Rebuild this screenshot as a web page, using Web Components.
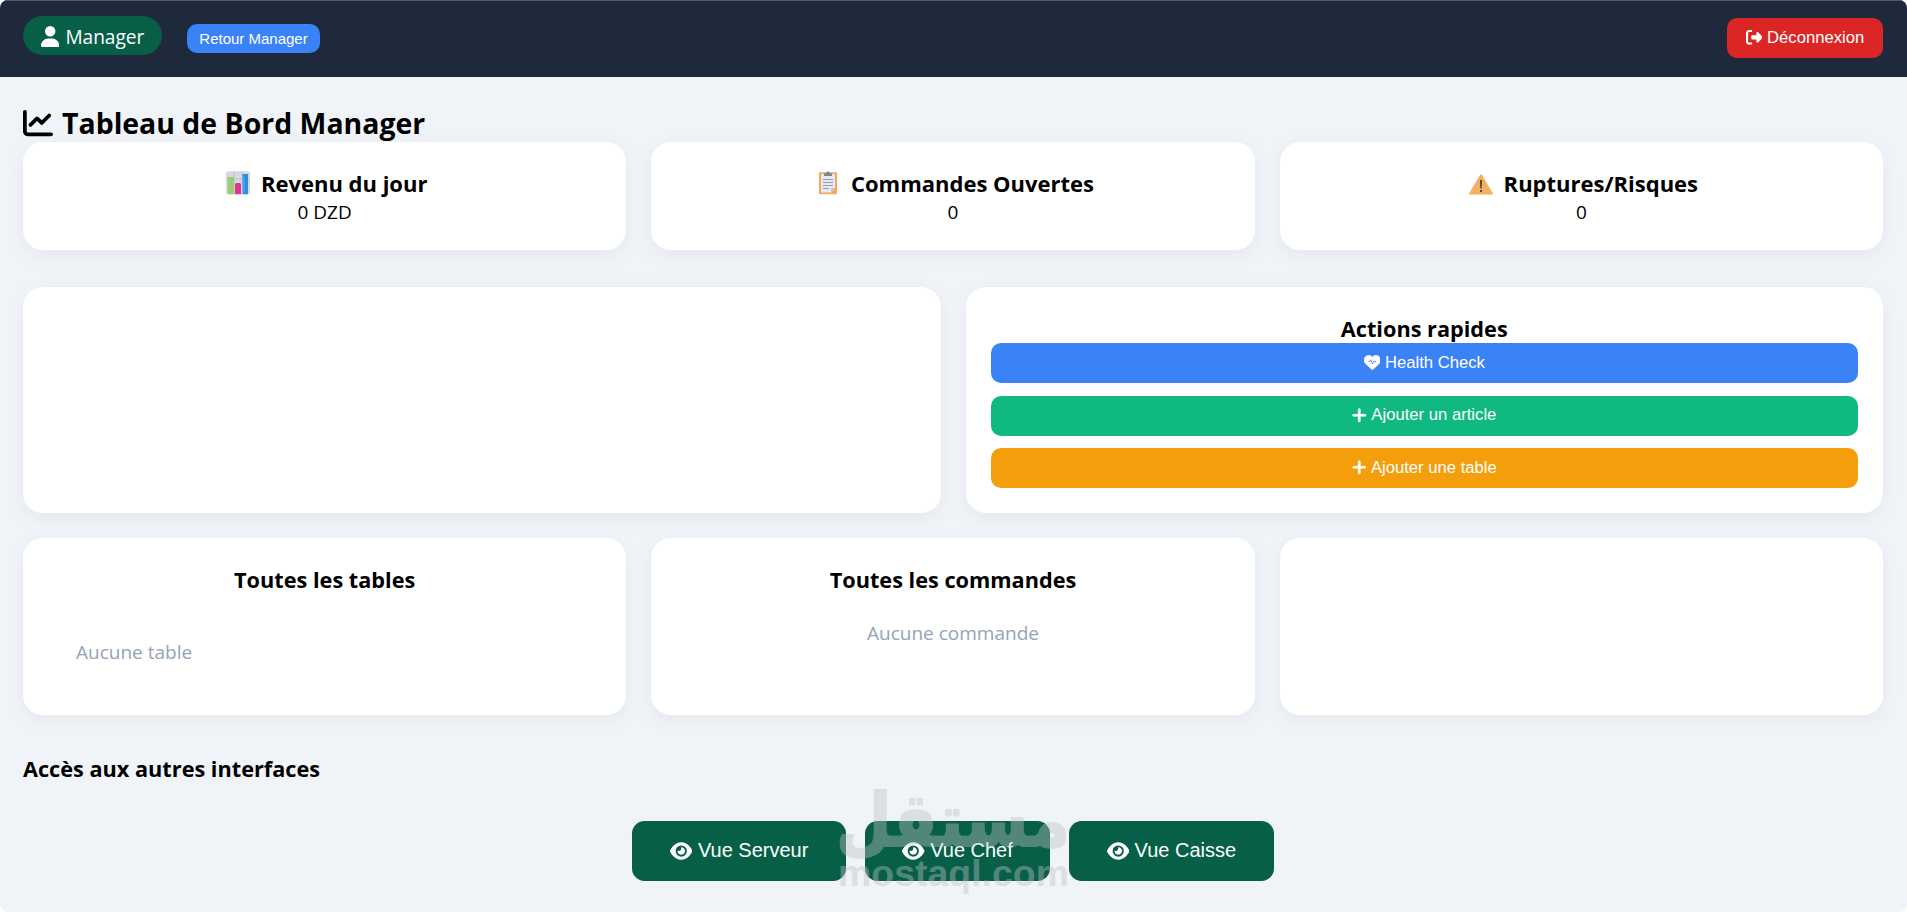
<!DOCTYPE html>
<html lang="fr">
<head>
<meta charset="utf-8">
<title>Tableau de Bord Manager</title>
<style>
  body {
    margin: 0;
    background: #fff;
    font-family: "Open Sans", "Noto Sans", sans-serif;
    color: #000;
  }
</style>
</head>
<body>
<manager-dashboard></manager-dashboard>

<script>
const ICONS = {
  user: { box: '0 0 448 512', body: '<path d="M224 256A128 128 0 1 0 224 0a128 128 0 1 0 0 256zm-45.7 48C79.8 304 0 383.8 0 482.3C0 498.7 13.3 512 29.7 512H418.3c16.4 0 29.7-13.3 29.7-29.7C448 383.8 368.2 304 269.7 304H178.3z"/>' },
  chart: { box: '0 0 512 512', body: '<path d="M64 64c0-17.7-14.3-32-32-32S0 46.3 0 64V400c0 44.2 35.8 80 80 80H480c17.7 0 32-14.3 32-32s-14.3-32-32-32H80c-8.8 0-16-7.2-16-16V64zm406.6 86.6c12.5-12.5 12.5-32.8 0-45.3s-32.8-12.5-45.3 0L320 210.7l-57.4-57.4c-12.5-12.5-32.8-12.5-45.3 0l-112 112c-12.5 12.5-12.5 32.8 0 45.3s32.8 12.5 45.3 0L240 221.3l57.4 57.4c12.5 12.5 32.8 12.5 45.3 0l128-128z"/>' },
  logout: { box: '0 0 512 512', body: '<path d="M377.9 105.9L500.7 228.7c7.2 7.2 11.3 17.1 11.3 27.3s-4.1 20.1-11.3 27.3L377.9 406.1c-6.4 6.4-15 9.9-24 9.9c-18.7 0-33.9-15.2-33.9-33.9l0-62.1-128 0c-17.7 0-32-14.3-32-32l0-64c0-17.7 14.3-32 32-32l128 0 0-62.1c0-18.7 15.2-33.9 33.9-33.9c9 0 17.6 3.6 24 9.9zM160 96L96 96c-17.7 0-32 14.3-32 32l0 256c0 17.7 14.3 32 32 32l64 0c17.7 0 32 14.3 32 32s-14.3 32-32 32l-64 0c-53 0-96-43-96-96L0 128C0 75 43 32 96 32l64 0c17.7 0 32 14.3 32 32s-14.3 32-32 32z"/>' },
  heart: { box: '0 0 512 512', body: '<path d="M47.6 300.4L228.3 469.1c7.5 7 17.4 10.9 27.7 10.9s20.2-3.9 27.7-10.9L464.4 300.4c30.4-28.3 47.6-68 47.6-109.5v-5.8c0-69.9-50.5-129.5-119.4-141C347 36.5 300.6 51.4 268 84L256 96 244 84c-32.6-32.6-79-47.5-124.6-39.9C50.5 55.6 0 115.2 0 185.1v5.8c0 41.5 17.2 81.2 47.6 109.5z" stroke="currentColor" stroke-width="14"/><path d="M140 232h34l34-52 50 124 48-92 22 22h44" fill="none" stroke="#3b82f6" stroke-width="26"/>' },
  plus: { box: '0 0 448 512', body: '<path d="M256 80c0-17.7-14.3-32-32-32s-32 14.3-32 32V224H48c-17.7 0-32 14.3-32 32s14.3 32 32 32H192V432c0 17.7 14.3 32 32 32s32-14.3 32-32V288H400c17.7 0 32-14.3 32-32s-14.3-32-32-32H256V80z" stroke="currentColor" stroke-width="16"/>' },
  eye: { box: '0 0 576 512', body: '<path d="M288 32c-80.8 0-145.5 36.8-192.6 80.6C48.6 156 17.3 208 2.5 243.7c-3.3 7.9-3.3 16.7 0 24.6C17.3 304 48.6 356 95.4 399.4C142.5 443.2 207.2 480 288 480s145.5-36.8 192.6-80.6c46.8-43.5 78.1-95.4 93-131.1c3.3-7.9 3.3-16.7 0-24.6c-14.9-35.7-46.2-87.7-93-131.1C433.5 68.8 368.8 32 288 32zM144 256a144 144 0 1 1 288 0 144 144 0 1 1 -288 0zm144-64c0 35.3-28.7 64-64 64c-7.1 0-13.9-1.2-20.3-3.3c-5.5-1.8-11.9 1.6-11.7 7.4c.3 6.9 1.3 13.8 3.2 20.7c13.7 51.2 66.4 81.6 117.6 67.9s81.6-66.4 67.9-117.6c-11.1-41.5-47.8-69.4-88.6-71.1c-5.8-.2-9.2 6.1-7.4 11.7c2.1 6.4 3.3 13.2 3.3 20.3z"/>' },
  bars: { box: '0 0 24 24', body: '<rect y=".3" width="24" height="23" rx="2.5" fill="#d6d9e2"/><path d="M8 .3v23M16 .3v23M0 8h24" stroke="#bcbfca" stroke-width=".9"/><path d="M2 6h6v17.3H2.500q-1 0-1-1V6z" fill="#9dcc78"/><path d="M9 13.500q0-1.500 1.500-1.500h3q1.500 0 1.500 1.500v9.800H9z" fill="#e0368c"/><path d="M16.500 3h5.500v20.300h-5.500z" fill="#2b8fe0"/><path d="M18 5v17" stroke="#55b5f3" stroke-width="1"/>' },
  clipboard: { box: '-3 0 24 24', body: '<rect y="1.300" width="18" height="22" rx="1" fill="#f0a956"/><path d="M2 3h14v14l-4 4.500H2z" fill="#e9e9f3"/><path d="M12 21.500V17h4z" fill="#c3c3d6"/><path d="M5 5V2.500h2a2 2 0 0 1 4 0h2V5z" fill="#7c8793"/><path d="M4 8.500h10M4 11.500h10M4 14.500h10M4 17.500h6" stroke="#8e9eb4" stroke-width="1"/>' },
  warning: { box: '0 0 24 24', body: '<path d="M11 4q1-1.500 2 0l10.700 18q.6 1.400-.9 1.400H1.200Q-.3 23.400.3 22z" fill="#f5b05b"/><path d="M10.900 9h2.200l-.4 8.500h-1.400zM11 19h2v2h-2z" fill="#4a4857"/>' }
}

class DashIcon extends HTMLElement {
  constructor() {
    super()
    this.attachShadow({ mode: 'open' })
  }

  connectedCallback() {
    const icon = ICONS[this.getAttribute('name')]
    this.shadowRoot.innerHTML = `
      <style>
        :host { display: inline-block; flex: none; height: 1em; }
        svg { display: block; height: 1em; fill: currentColor; }
      </style>
      <svg viewBox="${icon.box}" aria-hidden="true">${icon.body}</svg>
    `
  }
}

const buttonTemplate = document.createElement('template')
buttonTemplate.innerHTML = `
  <style>
    :host { display: block; }
    button {
      display: flex;
      align-items: center;
      justify-content: center;
      gap: .28em;
      box-sizing: border-box;
      width: 100%;
      height: var(--h, 40px);
      padding: 0 var(--pad, 18px) 1px;
      border: 0;
      border-radius: var(--r, 10px);
      background: var(--bg, #3b82f6);
      color: #fff;
      font: var(--size, 16.67px) "Liberation Sans", Arial, sans-serif;
      white-space: nowrap;
      cursor: pointer;
    }
  </style>
  <button><slot name="icon"></slot><span><slot></slot></span></button>
`

class DashButton extends HTMLElement {
  constructor() {
    super()
    this.attachShadow({ mode: 'open' })
    this.shadowRoot.appendChild(buttonTemplate.content.cloneNode(true))
  }
}

const cardTemplate = document.createElement('template')
cardTemplate.innerHTML = `
  <style>
    :host {
      display: block;
      box-sizing: border-box;
      padding: 25px;
      border-radius: 20px;
      background: #fff;
      box-shadow: 0 5px 19px rgba(0, 0, 0, .05);
      text-align: center;
      font-size: 19px;
      line-height: 29px;
    }
  </style>
  <slot name="title"></slot>
  <slot></slot>
`

class DashCard extends HTMLElement {
  constructor() {
    super()
    this.attachShadow({ mode: 'open' })
    this.shadowRoot.appendChild(cardTemplate.content.cloneNode(true))
  }
}

class DashHeading extends HTMLElement {
  constructor() {
    super()
    this.attachShadow({ mode: 'open' })
    this.shadowRoot.innerHTML = `
      <style>
        :host { display: block; }
        h3 {
          display: flex;
          justify-content: var(--justify, center);
          gap: 11px;
          margin: 0;
          font-size: var(--title-size, 21.700px);
          line-height: var(--title-line, 33px);
          height: 31px;
          font-weight: 700;
          white-space: nowrap;
        }
        ::slotted(dash-icon) { font-size: 24px; margin: 4px 0 0 4px; }
      </style>
      <h3><slot name="icon"></slot><span><slot></slot></span></h3>
    `
  }
}

class DashHeader extends HTMLElement {
  constructor() {
    super()
    this.attachShadow({ mode: 'open' })
    this.shadowRoot.innerHTML = `
      <style>
        :host {
          display: flex;
          align-items: flex-start;
          box-sizing: border-box;
          height: 77px;
          padding: 15px 24px 0 23px;
          border-top: 1px solid #4f5a68;
          background: #1e293b;
          color: #fff;
        }
        .role {
          display: flex;
          align-items: center;
          gap: 6px;
          box-sizing: border-box;
          width: 139px;
          height: 39px;
          padding: 2px 0 0 18px;
          border-radius: 20px;
          background: #065f46;
          font-size: 19.100px;
          white-space: nowrap;
        }
        .role dash-icon { font-size: 21px; margin-top: -1px; }
        .back { width: 133px; margin: 8px 0 0 25px; --h: 29px; --size: 15px; --pad: 0; }
        .logout { width: 156px; margin: 2px 0 0 auto; --bg: #dc2626; --pad: 0; }
      </style>
      <div class="role"><dash-icon name="user"></dash-icon><span>Manager</span></div>
      <dash-button class="back">Retour Manager</dash-button>
      <dash-button class="logout"><dash-icon slot="icon" name="logout"></dash-icon>Déconnexion</dash-button>
    `
  }
}

class SiteWatermark extends HTMLElement {
  constructor() {
    super()
    this.attachShadow({ mode: 'open' })
    this.shadowRoot.innerHTML = `
      <style>
        :host {
          position: absolute;
          left: 839px;
          top: 780px;
          opacity: .41;
          pointer-events: none;
        }
        svg { display: block; fill: #bfbfc4; overflow: visible; }
        .arabic { stroke: #bfbfc4; stroke-width: 2; stroke-linejoin: round; }
      </style>
      <svg width="228" height="120">
        <text class="arabic" x="114" y="66" text-anchor="middle" textLength="234" lengthAdjust="spacingAndGlyphs"
          font-family="DejaVu Sans, sans-serif" font-weight="700" font-size="74">مستقل</text>
        <text x="-1" y="106" textLength="231" lengthAdjust="spacingAndGlyphs"
          font-family="Liberation Sans, sans-serif" font-weight="700" font-size="37">mostaql.com</text>
      </svg>
    `
  }
}

class ManagerDashboard extends HTMLElement {
  constructor() {
    super()
    this.attachShadow({ mode: 'open' })
    this.shadowRoot.innerHTML = `
      <style>
        :host {
          display: block;
          position: relative;
          height: 912px;
          overflow: hidden;
          border-radius: 8px;
          background: #f0f4f8;
        }
        main { padding: 27px 24px 0 23px; }
        h1 {
          display: flex;
          gap: 9px;
          height: 38px;
          margin: 0;
          font-size: 28.450px;
          line-height: 38px;
          white-space: nowrap;
        }
        h1 dash-icon { font-size: 30px; margin-top: 3.500px; }
        .row { display: grid; grid-template-columns: repeat(3, 1fr); gap: 25px; }
        .stats { --title-size: 22px; --title-line: 32px; }
        .stats dash-card { height: 108px; }
        .middle { grid-template-columns: repeat(2, 1fr); margin-top: 37px; }
        .middle dash-card { height: 226px; }
        .actions { display: grid; gap: 12.500px; }
        .green { --bg: #10b981; }
        .orange { --bg: #f59e0b; }
        .lists { margin-top: 25px; }
        .lists dash-card { height: 177px; }
        .empty { color: #94a3b8; }
        .empty.tables { padding: 44px 28px 0; text-align: left; }
        .empty.orders { padding-top: 25px; }
        .views-title { margin-top: 37px; --justify: flex-start; }
        .views {
          display: flex;
          justify-content: center;
          gap: 18.700px;
          margin-top: 38px;
          --h: 60px;
          --r: 12.500px;
          --bg: #065f46;
          --size: 20px;
          --pad: 37.500px;
        }
      </style>
      <dash-header></dash-header>
      <main>
        <h1><dash-icon name="chart"></dash-icon><span>Tableau de Bord Manager</span></h1>
        <div class="row stats">
          <dash-card>
            <dash-heading slot="title"><dash-icon slot="icon" name="bars"></dash-icon>Revenu du jour</dash-heading>
            <div>0 DZD</div>
          </dash-card>
          <dash-card>
            <dash-heading slot="title"><dash-icon slot="icon" name="clipboard"></dash-icon>Commandes Ouvertes</dash-heading>
            <div>0</div>
          </dash-card>
          <dash-card>
            <dash-heading slot="title"><dash-icon slot="icon" name="warning"></dash-icon>Ruptures/Risques</dash-heading>
            <div>0</div>
          </dash-card>
        </div>
        <div class="row middle">
          <dash-card></dash-card>
          <dash-card>
            <dash-heading slot="title">Actions rapides</dash-heading>
            <div class="actions">
              <dash-button><dash-icon slot="icon" name="heart"></dash-icon>Health Check</dash-button>
              <dash-button class="green"><dash-icon slot="icon" name="plus"></dash-icon>Ajouter un article</dash-button>
              <dash-button class="orange"><dash-icon slot="icon" name="plus"></dash-icon>Ajouter une table</dash-button>
            </div>
          </dash-card>
        </div>
        <div class="row lists">
          <dash-card>
            <dash-heading slot="title">Toutes les tables</dash-heading>
            <div class="empty tables">Aucune table</div>
          </dash-card>
          <dash-card>
            <dash-heading slot="title">Toutes les commandes</dash-heading>
            <div class="empty orders">Aucune commande</div>
          </dash-card>
          <dash-card></dash-card>
        </div>
        <dash-heading class="views-title">Accès aux autres interfaces</dash-heading>
        <div class="views">
          <dash-button><dash-icon slot="icon" name="eye"></dash-icon>Vue Serveur</dash-button>
          <dash-button><dash-icon slot="icon" name="eye"></dash-icon>Vue Chef</dash-button>
          <dash-button><dash-icon slot="icon" name="eye"></dash-icon>Vue Caisse</dash-button>
        </div>
      </main>
      <site-watermark></site-watermark>
    `
  }
}

window.customElements.define('dash-icon', DashIcon)
window.customElements.define('dash-button', DashButton)
window.customElements.define('dash-card', DashCard)
window.customElements.define('dash-heading', DashHeading)
window.customElements.define('dash-header', DashHeader)
window.customElements.define('site-watermark', SiteWatermark)
window.customElements.define('manager-dashboard', ManagerDashboard)
</script>
</body>
</html>
